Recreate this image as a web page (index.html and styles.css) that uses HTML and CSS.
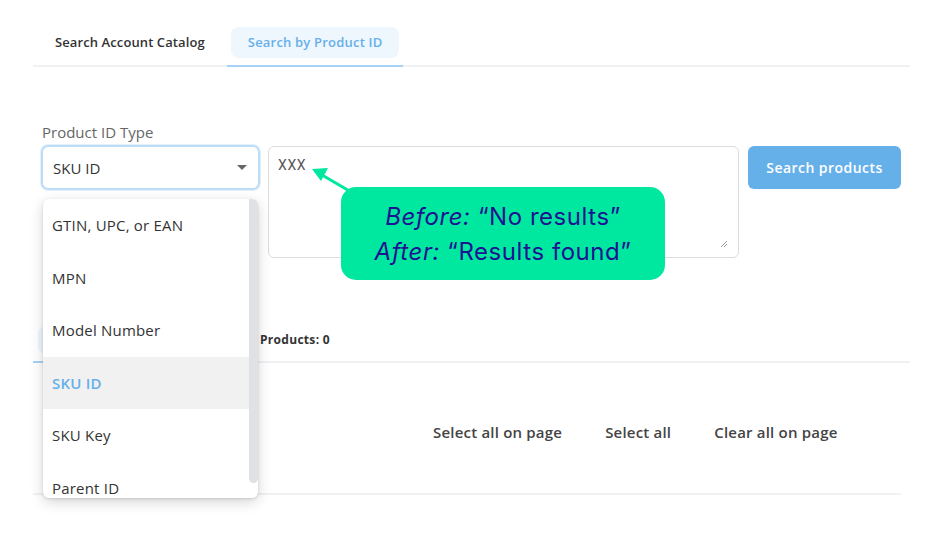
FILE: index.html
```html
<!DOCTYPE html>
<html lang="en">
<head>
<meta charset="utf-8">
<title>Search by Product ID</title>
<link rel="stylesheet" href="styles.css">
</head>
<body>
<div class="page">
  <nav class="tabs">
    <div class="tab"><span class="tab-pill">Search Account Catalog</span></div>
    <div class="tab active"><span class="tab-pill">Search by Product ID</span></div>
  </nav>

  <section class="search">
    <label class="field-label">Product ID Type</label>
    <div class="form-row">
      <div class="select">
        <span>SKU ID</span>
        <span class="caret"></span>
      </div>
      <div class="textarea">
        <span class="typed">XXX</span>
        <svg class="resize" width="8" height="8" viewBox="0 0 8 8"><path d="M7 1L1 7M7 4L4 7" stroke="#999" stroke-width="1" fill="none"/></svg>
      </div>
      <button class="btn">Search products</button>
    </div>
  </section>

  <div class="results-bar">
    <div class="results-tab"><span class="results-pill"></span></div>
    <span class="count">Products: 0</span>
  </div>

  <div class="actions">
    <span>Select all on page</span>
    <span>Select all</span>
    <span>Clear all on page</span>
  </div>

  <div class="dropdown">
    <div class="option">GTIN, UPC, or EAN</div>
    <div class="option">MPN</div>
    <div class="option">Model Number</div>
    <div class="option selected">SKU ID</div>
    <div class="option">SKU Key</div>
    <div class="option">Parent ID</div>
    <div class="scroll-thumb"></div>
  </div>

  <svg class="arrow" width="60" height="40" viewBox="0 0 60 40">
    <line x1="48" y1="34" x2="12" y2="13" stroke="#00e8a0" stroke-width="3"/>
    <polygon points="2,7 18,6 11,19" fill="#00e8a0"/>
  </svg>

  <div class="callout">
    <div><em>Before:</em> “No results”</div>
    <div><em>After:</em> “Results found”</div>
  </div>
</div>
</body>
</html>
```

FILE: styles.css
```css
* { box-sizing: border-box; }
html, body { margin: 0; padding: 0; background: #fff; }
body {
  font-family: "Open Sans", "Noto Sans", sans-serif;
  color: #333;
  width: 950px;
  height: 534px;
  overflow: hidden;
}
.page {
  position: relative;
  padding: 27px 40px 0 33px;
}

/* Tabs */
.tabs {
  display: flex;
  border-bottom: 2px solid #f0f1f2;
  width: 877px;
}
.tab {
  padding: 0 4px 7px;
  margin-bottom: -2px;
  border-bottom: 2px solid transparent;
}
.tab-pill {
  display: block;
  height: 31px;
  line-height: 31px;
  padding: 0 18px;
  font-size: 13px;
  font-weight: 600;
  letter-spacing: 0.1px;
  color: #333;
  border-radius: 8px;
}
.tab.active { border-bottom-color: #a7d2f4; }
.tab.active .tab-pill { background: #eef6fe; color: #66b0ea; padding: 0 17px; letter-spacing: 0.2px; }

/* Search form */
.search { padding: 57px 0 0 8px; }
.field-label {
  display: block;
  font-size: 15px;
  line-height: 17px;
  color: #666;
  margin-left: 1px;
}
.form-row {
  display: flex;
  align-items: flex-start;
  margin-top: 4px;
}
.select {
  width: 219px;
  height: 45px;
  border: 2px solid #bddcf6;
  box-shadow: 0 0 0 1px #e3f0fb;
  border-radius: 7px;
  display: flex;
  align-items: center;
  justify-content: space-between;
  padding: 0 11px 0 10px;
  font-size: 15px;
  color: #333;
}
.caret {
  width: 0; height: 0;
  border-left: 5px solid transparent;
  border-right: 5px solid transparent;
  border-top: 5px solid #666;
}
.textarea {
  position: relative;
  margin: 1px 0 0 8px;
  width: 471px;
  height: 112px;
  border: 1px solid #dcdcdc;
  border-radius: 6px;
  padding: 9px 9px;
  font-size: 14px;
  line-height: 18px;
  color: #555;
  font-family: Roboto, Arial, sans-serif;
  letter-spacing: 0.6px;
}
.resize { position: absolute; right: 10px; bottom: 9px; }
.btn {
  margin: 1px 0 0 9px;
  width: 153px;
  height: 43px;
  border: none;
  border-radius: 6px;
  background: #66b0ea;
  color: #fff;
  font-family: "Open Sans", "Noto Sans", sans-serif;
  font-size: 14px;
  font-weight: 600;
  letter-spacing: 0.45px;
}

/* Results */
.results-bar {
  margin-top: 68px;
  display: flex;
  align-items: center;
  border-bottom: 2px solid #f0f1f2;
  width: 877px;
}
.results-tab {
  padding: 0 0 7px;
  margin-bottom: -2px;
  border-bottom: 2px solid #a7d2f4;
  width: 215px;
}
.results-pill {
  display: block;
  height: 28px;
  margin-left: 5px;
  border-radius: 8px;
  background: #eef6fe;
}
.count {
  margin-left: 12px;
  padding-bottom: 9px;
  font-size: 12px;
  font-weight: 700;
  letter-spacing: 0.3px;
  color: #333;
}

.actions {
  display: flex;
  gap: 43px;
  padding: 59px 0 51px 400px;
  border-bottom: 2px solid #f1f1f2;
  width: 868px;
  font-size: 15px;
  line-height: 20px;
  font-weight: 600;
  color: #444;
  letter-spacing: 0.2px;
}

/* Dropdown overlay */
.dropdown {
  position: absolute;
  left: 43px;
  top: 199px;
  width: 215px;
  height: 299px;
  background: #fff;
  border-radius: 6px;
  box-shadow: 0 4px 14px rgba(0,0,0,0.16), 0 1px 3px rgba(0,0,0,0.12);
  overflow: hidden;
}
.option {
  height: 52.6px;
  line-height: 52.6px;
  padding-left: 9px;
  font-size: 15px;
  letter-spacing: 0.2px;
  color: #333;
}
.option.selected { background: #f1f1f2; color: #66b0ea; font-weight: 600; }
.scroll-thumb {
  position: absolute;
  right: 0;
  top: 0;
  width: 9px;
  height: 284px;
  background: #e0e1e5;
  border-radius: 0 0 5px 5px;
}

/* Annotation */
.arrow {
  position: absolute;
  left: 310px;
  top: 162px;
}
.callout {
  position: absolute;
  left: 341px;
  top: 187px;
  width: 324px;
  height: 93px;
  background: #00e8a0;
  border-radius: 15px;
  display: flex;
  flex-direction: column;
  justify-content: center;
  align-items: center;
  font-family: Inter, "Liberation Sans", sans-serif;
  font-size: 24px;
  letter-spacing: 0.55px;
  line-height: 35px;
  color: #1d1390;
}
.callout em { font-style: italic; }
```
